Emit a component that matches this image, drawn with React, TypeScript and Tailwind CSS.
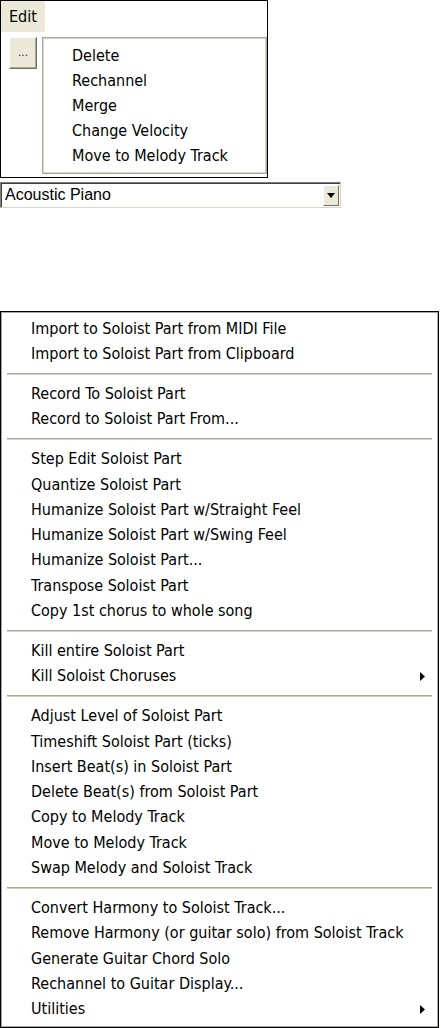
import React from "react";

type Item = { label: string; sub?: boolean };

const FONT = "font-['DejaVu_Sans_Condensed','DejaVu_Sans',sans-serif] [font-stretch:condensed]";

const editItems = ["Delete", "Rechannel", "Merge", "Change Velocity", "Move to Melody Track"];

const soloistGroups: Item[][] = [
  [{ label: "Import to Soloist Part from MIDI File" }, { label: "Import to Soloist Part from Clipboard" }],
  [{ label: "Record To Soloist Part" }, { label: "Record to Soloist Part From..." }],
  [
    { label: "Step Edit Soloist Part" },
    { label: "Quantize Soloist Part" },
    { label: "Humanize Soloist Part w/Straight Feel" },
    { label: "Humanize Soloist Part w/Swing Feel" },
    { label: "Humanize Soloist Part..." },
    { label: "Transpose Soloist Part" },
    { label: "Copy 1st chorus to whole song" },
  ],
  [{ label: "Kill entire Soloist Part" }, { label: "Kill Soloist Choruses", sub: true }],
  [
    { label: "Adjust Level of Soloist Part" },
    { label: "Timeshift Soloist Part (ticks)" },
    { label: "Insert Beat(s) in Soloist Part" },
    { label: "Delete Beat(s) from Soloist Part" },
    { label: "Copy to Melody Track" },
    { label: "Move to Melody Track" },
    { label: "Swap Melody and Soloist Track" },
  ],
  [
    { label: "Convert Harmony to Soloist Track..." },
    { label: "Remove Harmony (or guitar solo) from Soloist Track" },
    { label: "Generate Guitar Chord Solo" },
    { label: "Rechannel to Guitar Display..." },
    { label: "Utilities", sub: true },
  ],
];

const SubArrow = () => (
  <svg width="5" height="9" viewBox="0 0 5 9" className="shrink-0">
    <path d="M0 0 L5 4.5 L0 9 Z" fill="#000" />
  </svg>
);

const EditPanel = () => (
  <div className="flex flex-col w-[268px] h-[178px] border border-black bg-white">
    <div className={`w-[44px] h-[31px] bg-[#ece9d8] flex items-center pl-[8px] pt-[1px] text-[16px] text-black ${FONT}`}>
      Edit
    </div>
    <div className="flex">
      <button className="ml-[8px] mt-[5px] w-[28px] h-[32px] bg-[#ece9d8] border border-t-white border-l-white border-r-[#716f64] border-b-[#716f64] shadow-[inset_-1px_-1px_0_#aca899] flex items-center justify-center pb-[3px] text-[12px] text-[#333] font-['Liberation_Sans',sans-serif]">
        ...
      </button>
      <div className="ml-[5px] mt-[5px] w-[225px] h-[137px] border border-[#aca899] shadow-[inset_0_0_0_1px_#d8d5c8] bg-white pt-[5px] flex flex-col">
        {editItems.map((label) => (
          <div key={label} className={`h-[25px] flex items-center pl-[29px] text-[16px] text-black ${FONT}`}>
            {label}
          </div>
        ))}
      </div>
    </div>
  </div>
);

const InstrumentCombo = () => (
  <div className="mt-[4px] w-[341px] h-[26px] flex items-center border border-t-[#7f7d74] border-l-[#7f7d74] border-r-[#d8d5c8] border-b-[#d8d5c8] shadow-[inset_1px_1px_0_#404040] bg-white">
    <div className="flex-1 pl-[4px] text-[16px] text-black font-['Liberation_Sans',sans-serif]">Acoustic Piano</div>
    <div className="mr-[1px] w-[16px] h-[21px] bg-[#ece9d8] border border-t-white border-l-white border-r-[#716f64] border-b-[#716f64] flex items-center justify-center">
      <svg width="8" height="5" viewBox="0 0 8 5">
        <path d="M0 0 L8 0 L4 5 Z" fill="#000" />
      </svg>
    </div>
  </div>
);

const SoloistMenu = () => (
  <div className="mt-[103px] w-[439px] h-[717px] border border-black bg-white">
    <div className="h-full border border-[#aca899] pt-[3px] flex flex-col">
      {soloistGroups.map((group, gi) => (
        <React.Fragment key={gi}>
          {gi > 0 && (
            <div className="h-[14.7px] flex items-center px-[5px]">
              <div className="w-full h-[2px] bg-[#d4d1c4] border-t border-[#aca899]" />
            </div>
          )}
          {group.map((item) => (
            <div
              key={item.label}
              className={`h-[25.3px] shrink-0 flex items-center pl-[29px] pr-[12px] text-[16px] text-black ${FONT}`}
            >
              <span className="flex-1 whitespace-nowrap">{item.label}</span>
              {item.sub && <SubArrow />}
            </div>
          ))}
        </React.Fragment>
      ))}
    </div>
  </div>
);

export default function App() {
  return (
    <div className="w-[441px] h-[1028px] bg-white flex flex-col overflow-hidden">
      <EditPanel />
      <InstrumentCombo />
      <SoloistMenu />
    </div>
  );
}
